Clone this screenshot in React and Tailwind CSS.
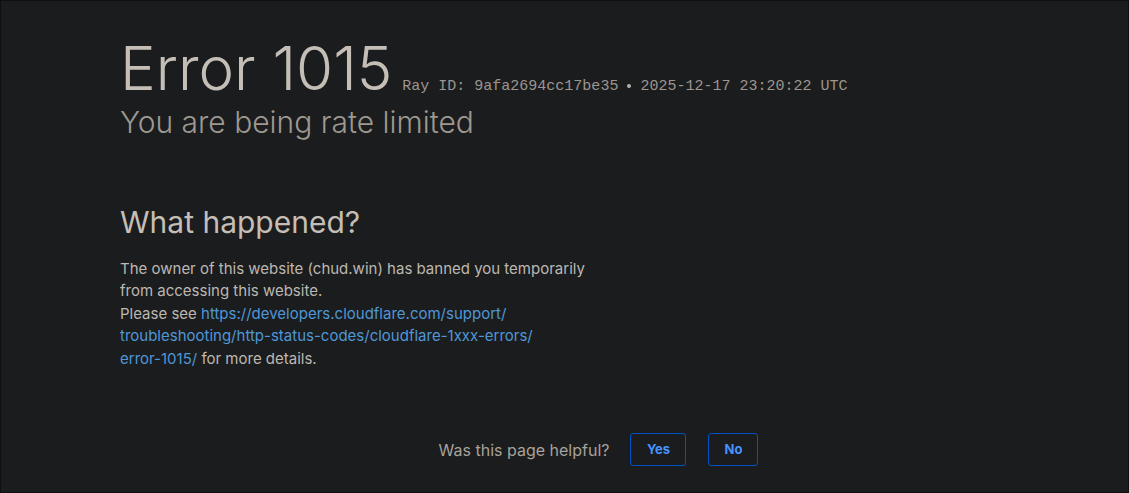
export default function App() {
  return (
    <div
      className="flex h-[493px] w-[1129px] flex-col overflow-hidden border border-[#0e0f10] bg-[#1b1c1e]"
      style={{ fontFamily: 'Inter, "Noto Sans", sans-serif' }}
    >
      <header className="pl-[119px] pt-[33px]">
        <div className="flex items-baseline">
          <h1 className="text-[60px] font-light leading-[68px] text-[#c4beb6]">Error 1015</h1>
          <span
            className="ml-[10px] text-[15px] text-[#9b968f]"
            style={{ fontFamily: '"Liberation Mono", monospace' }}
          >
            Ray ID: 9afa2694cc17be35
            <span className="mx-[9px] inline-block h-[4px] w-[4px] rounded-full bg-[#b5b0a9] align-middle" />
            2025-12-17 23:20:22 UTC
          </span>
        </div>
        <h2 className="mt-[2px] text-[30px] font-light leading-[36px] text-[#9e9890]">
          You are being rate limited
        </h2>
      </header>

      <section className="pl-[119px] pt-[64px]">
        <h2 className="text-[30px] leading-[36px] text-[#c4beb6]">What happened?</h2>
        <p className="mt-[18px] w-[490px] text-[15px] leading-[22.4px] text-[#bcb8b2]">
          The owner of this website (chud.win) has banned you temporarily from accessing this
          website.
          <br />
          Please see{' '}
          <a className="text-[#4f97d6]" href="#">
            https://developers.cloudflare.com/support/
            <br />
            troubleshooting/http-status-codes/cloudflare-1xxx-errors/
            <br />
            error-1015/
          </a>{' '}
          for more details.
        </p>
      </section>

      <footer className="mt-[63px] flex items-center justify-center pl-[68px]">
        <span className="text-[16px] text-[#a7a29b]">Was this page helpful?</span>
        <button className="ml-[21px] h-[33px] w-[56px] rounded-[3px] border border-[#0051c3] text-[13px] font-bold text-[#4693ff]">
          Yes
        </button>
        <button className="ml-[22px] h-[33px] w-[50px] rounded-[3px] border border-[#0051c3] text-[13px] font-bold text-[#4693ff]">
          No
        </button>
      </footer>
    </div>
  )
}
